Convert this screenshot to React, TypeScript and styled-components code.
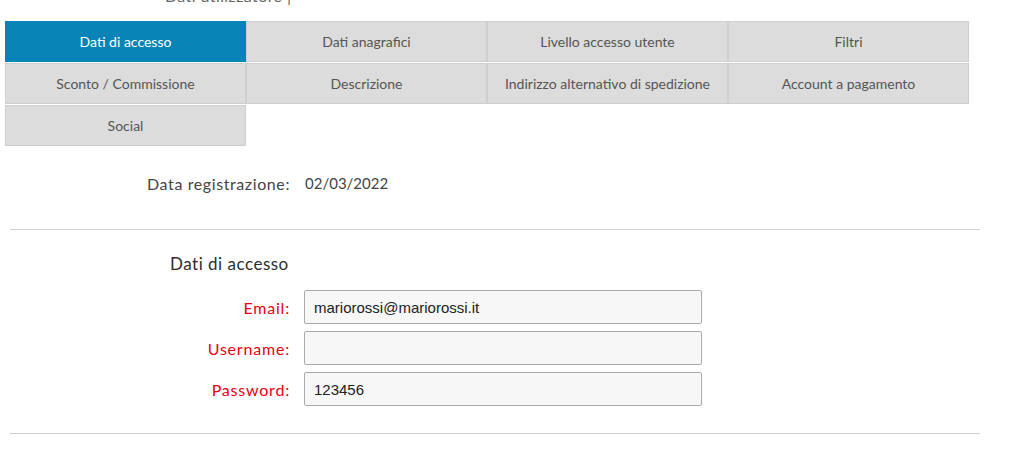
import React from 'react';
import styled, { createGlobalStyle } from 'styled-components';

const GlobalStyle = createGlobalStyle`
  html, body {
    margin: 0;
    padding: 0;
    background: #fff;
  }
  body {
    font-family: Lato, "Open Sans", sans-serif;
    color: #444;
  }
`;

const Page = styled.div`
  width: 1011px;
  height: 461px;
  overflow: hidden;
  padding-left: 5px;
  box-sizing: border-box;
`;

// title of the page above, scrolled mostly out of view
const CutTitle = styled.div`
  margin: -14px 0 0 160px;
  height: 35px;
  line-height: 20px;
  font-size: 16px;
  letter-spacing: 0.4px;
  color: #666;
`;

const Tabs = styled.div`
  display: grid;
  grid-template-columns: repeat(4, 241px);
  grid-auto-rows: 41px;
  row-gap: 1px;
`;

const Tab = styled.div<{ $active?: boolean }>`
  display: flex;
  align-items: center;
  justify-content: center;
  box-sizing: border-box;
  border: 1px solid ${p => (p.$active ? '#0784b5' : '#cfcfcf')};
  background: ${p => (p.$active ? '#0784b5' : '#dcdcdc')};
  color: ${p => (p.$active ? '#fff' : '#555')};
  font-size: 14px;
  cursor: pointer;
`;

const InfoRow = styled.div`
  display: grid;
  grid-template-columns: 285px 1fr;
  column-gap: 15px;
  align-items: center;
  margin-top: 27px;
  height: 20px;
  font-size: 15px;
  color: #444;
`;

const Label = styled.label<{ $required?: boolean }>`
  text-align: right;
  color: ${p => (p.$required ? '#e8000d' : '#444')};
  font-size: 16px;
  letter-spacing: ${p => (p.$required ? '0.8px' : '0.6px')};
`;

const Divider = styled.hr<{ $top: number }>`
  border: 0;
  border-top: 1px solid #cfcfcf;
  margin: ${p => p.$top}px 0 0 5px;
  width: 970px;
`;

const Heading = styled.h3`
  margin: 24px 0 0 165px;
  font-size: 17px;
  letter-spacing: 0.5px;
  font-weight: normal;
  color: #2e2e2e;
  line-height: 20px;
`;

const Form = styled.div`
  display: grid;
  grid-template-columns: 285px 398px;
  column-gap: 14px;
  row-gap: 7px;
  align-items: center;
  margin-top: 16px;
`;

const Input = styled.input`
  box-sizing: border-box;
  height: 34px;
  width: 398px;
  margin: 0;
  padding: 0 9px;
  border: 1px solid #aaa;
  border-radius: 2px;
  background: #f7f7f7;
  font-family: "Liberation Sans", Arial, sans-serif;
  font-size: 15px;
  color: #222;
  outline: none;
`;

const tabs = [
  'Dati di accesso',
  'Dati anagrafici',
  'Livello accesso utente',
  'Filtri',
  'Sconto / Commissione',
  'Descrizione',
  'Indirizzo alternativo di spedizione',
  'Account a pagamento',
  'Social',
];

const fields = [
  { label: 'Email', value: 'mariorossi@mariorossi.it', type: 'text' },
  { label: 'Username', value: '', type: 'text' },
  { label: 'Password', value: '123456', type: 'text' },
];

export default function App() {
  return (
    <>
      <GlobalStyle />
      <Page>
        <CutTitle>Dati utilizzatore |</CutTitle>
        <Tabs>
          {tabs.map((t, i) => (
            <Tab key={t} $active={i === 0}>
              {t}
            </Tab>
          ))}
        </Tabs>

        <InfoRow>
          <Label>Data registrazione:</Label>
          <span>02/03/2022</span>
        </InfoRow>

        <Divider $top={36} />

        <Heading>Dati di accesso</Heading>
        <Form>
          {fields.map(f => (
            <React.Fragment key={f.label}>
              <Label $required>{f.label}:</Label>
              <Input type={f.type} defaultValue={f.value} />
            </React.Fragment>
          ))}
        </Form>

        <Divider $top={27} />
      </Page>
    </>
  );
}
